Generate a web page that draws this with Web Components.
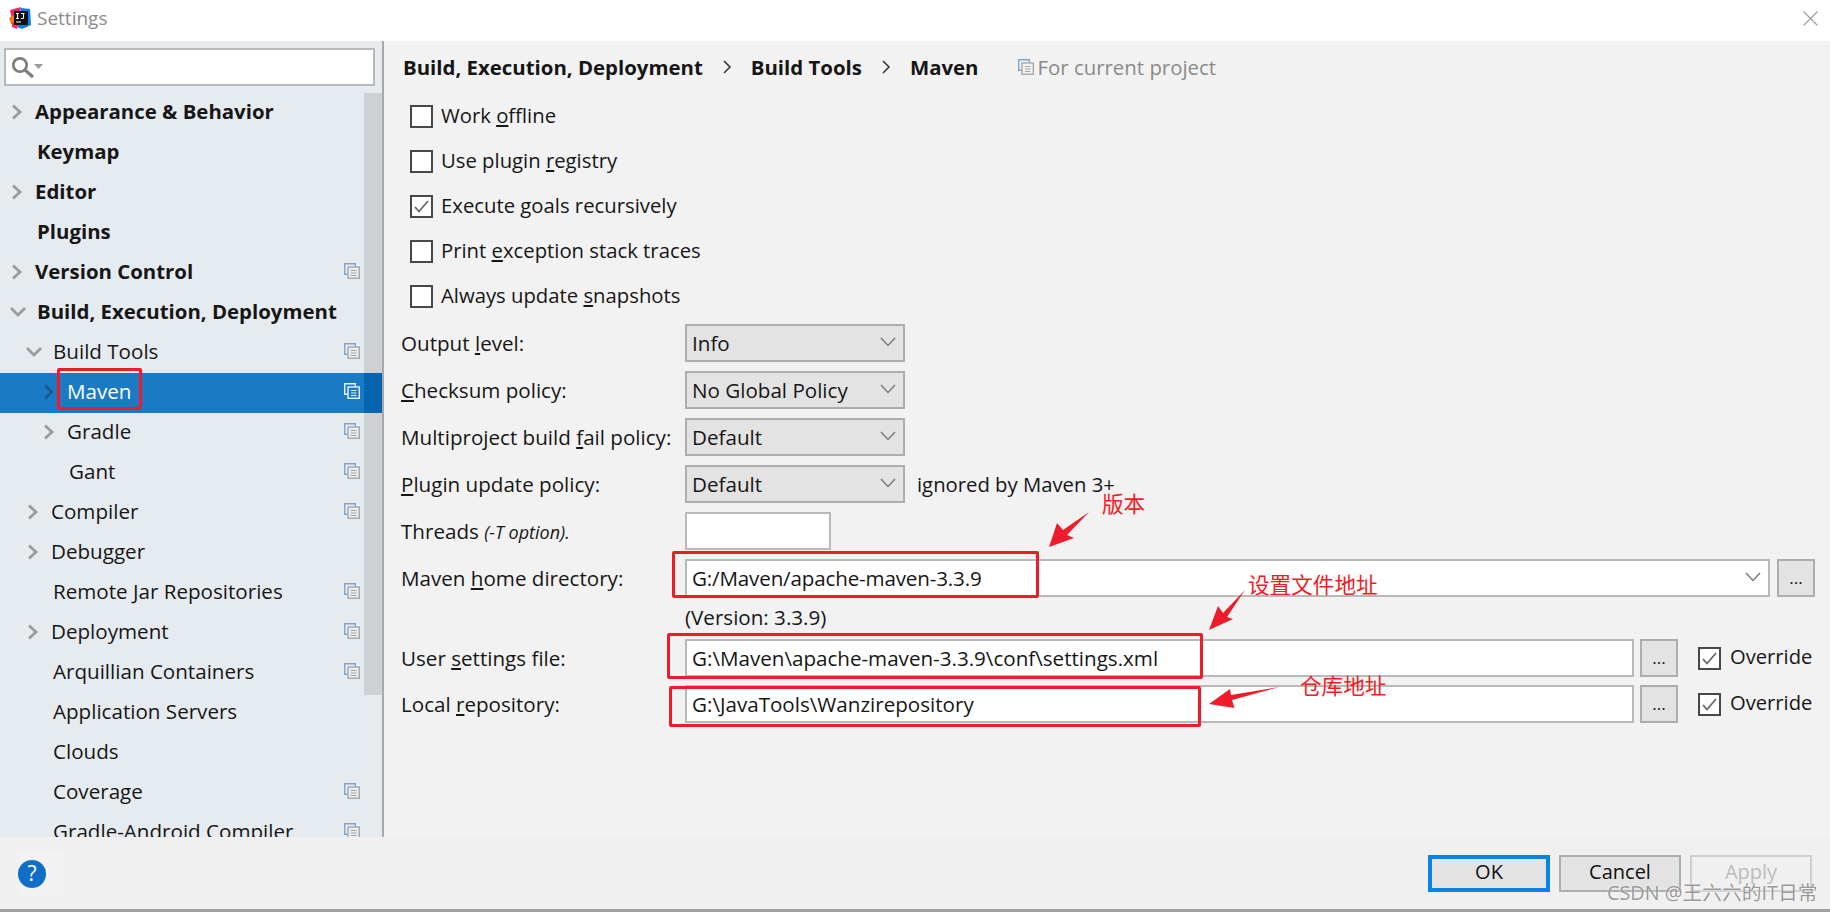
<!DOCTYPE html>
<html lang="en">
<head>
<meta charset="UTF-8" />
<title>Settings</title>
<style>
  html, body { margin: 0; padding: 0; height: 100%; overflow: hidden; }
  body { font-family: "Open Sans", "Noto Sans CJK SC", sans-serif; font-size: 20px; color: #111; }
</style>
</head>
<body>
<settings-dialog>
  <title-bar slot="title"></title-bar>

  <side-tree slot="side">
    <tree-row bold arrow="right" indent="0" text-at="35">Appearance &amp; Behavior</tree-row>
    <tree-row bold indent="0" text-at="37">Keymap</tree-row>
    <tree-row bold arrow="right" indent="0" text-at="35">Editor</tree-row>
    <tree-row bold indent="0" text-at="37">Plugins</tree-row>
    <tree-row bold arrow="right" indent="0" text-at="35" cfg>Version Control</tree-row>
    <tree-row bold arrow="down" indent="0" text-at="37">Build, Execution, Deployment</tree-row>
    <tree-row arrow="down" indent="16" text-at="53" cfg>Build Tools</tree-row>
    <tree-row selected arrow="right" indent="32" text-at="67" cfg>Maven</tree-row>
    <tree-row arrow="right" indent="32" text-at="67" cfg>Gradle</tree-row>
    <tree-row indent="32" text-at="69" cfg>Gant</tree-row>
    <tree-row arrow="right" indent="16" text-at="51" cfg>Compiler</tree-row>
    <tree-row arrow="right" indent="16" text-at="51">Debugger</tree-row>
    <tree-row indent="16" text-at="53" cfg>Remote Jar Repositories</tree-row>
    <tree-row arrow="right" indent="16" text-at="51" cfg>Deployment</tree-row>
    <tree-row indent="16" text-at="53" cfg>Arquillian Containers</tree-row>
    <tree-row indent="16" text-at="53">Application Servers</tree-row>
    <tree-row indent="16" text-at="53">Clouds</tree-row>
    <tree-row indent="16" text-at="53" cfg>Coverage</tree-row>
    <tree-row indent="16" text-at="53" cfg>Gradle-Android Compiler</tree-row>
  </side-tree>

  <maven-panel slot="main"></maven-panel>

  <dialog-footer slot="footer"></dialog-footer>
</settings-dialog>

<template id="dialog-tpl">
  <style>
    :host { display: flex; flex-direction: column; width: 1830px; height: 912px; position: relative; background: #f2f2f2; overflow: hidden; }
    .title { height: 41px; flex: none; }
    .body { flex: 1; display: flex; min-height: 0; }
    .side { width: 384px; flex: none; }
    .main { flex: 1; min-width: 0; }
    .footer { height: 75px; flex: none; }
  </style>
  <div class="title"><slot name="title"></slot></div>
  <div class="body">
    <div class="side"><slot name="side"></slot></div>
    <div class="main"><slot name="main"></slot></div>
  </div>
  <div class="footer"><slot name="footer"></slot></div>
</template>

<template id="title-tpl">
  <style>
    :host { display: flex; align-items: center; height: 41px; box-sizing: border-box; padding-bottom: 4px; background: #fff; color: #8c8c8c; font-size: 19px; }
    svg.logo { margin-left: 9px; margin-right: 5px; flex: none; }
    .name { margin-top: -2px; }
    .x { margin-left: auto; margin-right: 12px; flex: none; }
  </style>
  <svg class="logo" width="23" height="23" viewBox="0 0 23 23">
    <path d="M1 3 L12 0 L10 12 L3 13 Z" fill="#f0266f"/>
    <path d="M0 11 L5 8 L6 19 L2 17 Z" fill="#f97a12"/>
    <path d="M12 1 L21 2 L22 18 L13 22 L8 20 Z" fill="#087cfa"/>
    <path d="M3 15 L9 17 L8 22 L3 20 Z" fill="#fe2857"/>
    <rect x="5" y="4" width="14" height="14" fill="#111"/>
    <path d="M7 6.5h3M8.5 6.5v5M7 11.5h3M12 6.5h3.5M14.5 6.5v4.2q0 .8-1 .8h-1.500" stroke="#fff" stroke-width="1.100" fill="none"/>
    <rect x="7" y="14.500" width="5" height="1" fill="#fff"/>
  </svg>
  <span class="name">Settings</span>
  <svg class="x" width="15" height="15" viewBox="0 0 15 15"><path d="M.5.5l14 14M14.500.5l-14 14" stroke="#9a9a9a" stroke-width="1.100" fill="none"/></svg>
</template>

<template id="tree-tpl">
  <style>
    :host { display: flex; flex-direction: column; position: relative; height: 796px; background: #e6ebf0; border-right: 2px solid #a9a9a9; box-sizing: border-box; overflow: hidden; }
    .search { flex: none; height: 38px; margin: 7px 7px 7px 4px; background: #fff; border: 2px solid #b9b9b9; box-sizing: border-box; display: flex; align-items: center; padding-left: 6px; }
    .wrap { flex: 1; display: flex; min-height: 0; position: relative; }
    .rows { flex: 1; min-width: 0; }
    .bar { position: absolute; right: 0; top: 0; width: 18px; height: 602px; background: #ccd1d5; }
  </style>
  <div class="search">
    <svg width="32" height="26" viewBox="0 0 32 26"><circle cx="8" cy="11" r="6.700" fill="none" stroke="#7f7f7f" stroke-width="2.800"/><path d="M13 16l8 7" stroke="#7f7f7f" stroke-width="3.200"/><path d="M22 10h9l-4.500 5z" fill="#9a9a9a"/></svg>
  </div>
  <div class="wrap">
    <div class="bar"></div>
    <div class="rows"><slot></slot></div>
  </div>
</template>

<template id="row-tpl">
  <style>
    :host { display: flex; align-items: center; height: 40px; position: relative; white-space: nowrap; color: #161616; font-size: 20.6px; }
    :host([bold]) { font-weight: 700; font-size: 20.400px; }
    :host([selected]) { background: #1a7ac4; color: #fff; }
    .arrow { position: absolute; top: 11px; height: 16px; display: flex; align-items: center; }
    .label { position: absolute; top: 0; line-height: 37px; }
    .cfg { position: absolute; left: 344px; top: 10px; display: flex; }
    .thumb { display: none; position: absolute; right: 0; top: 0; bottom: 0; width: 18px; background: #0465ae; }
    :host([selected]) .thumb { display: block; }
  </style>
  <span class="thumb"></span>
  <span class="arrow"></span>
  <span class="label"><slot></slot></span>
  <span class="cfg"></span>
</template>

<template id="panel-tpl">
  <style>
    :host { display: flex; flex-direction: column; position: relative; height: 796px; padding: 0 0 0 17px; box-sizing: border-box; font-size: 20.6px; color: #161616; }
    .crumbs { display: flex; align-items: center; height: 44px; margin-top: 4px; margin-left: 2px; font-weight: 700; white-space: nowrap; font-size: 20.400px; }
    .crumbs .sep { margin: 0 19px; display: flex; }
    .crumbs .proj { font-weight: 400; color: #8a8a8a; margin-left: 39px; display: flex; align-items: center; gap: 4px; --cfg-f: #f2f2f2; }
    .checks { display: flex; flex-direction: column; gap: 22px; margin-top: 16px; margin-left: 9px; font-size: 20.300px; }
    .form { display: grid; grid-template-columns: 284px 1fr; margin-top: 16px; white-space: nowrap; }
    .lbl { align-self: center; }
    .row2 { display: flex; align-items: center; min-width: 0; }
    u { text-underline-offset: 2px; }
    i { font-size: 18px; }
    .hint { margin-left: 12px; font-size: 20.300px; }
    .gap47 { margin-bottom: 9px; }
    .over { margin-left: 14px; gap: 9px; font-size: 20.200px; --txt-top: -5px; }
  </style>
  <div class="crumbs">
    <span>Build, Execution, Deployment</span>
    <span class="sep"><svg width="10" height="16" viewBox="0 0 10 16"><path d="M2 2l6 6-6 6" stroke="#333" stroke-width="1.500" fill="none"/></svg></span>
    <span>Build Tools</span>
    <span class="sep"><svg width="10" height="16" viewBox="0 0 10 16"><path d="M2 2l6 6-6 6" stroke="#333" stroke-width="1.500" fill="none"/></svg></span>
    <span>Maven</span>
    <span class="proj"><cfg-icon></cfg-icon>For current project</span>
  </div>
  <div class="checks">
    <check-row>Work <u>o</u>ffline</check-row>
    <check-row>Use plugin <u>r</u>egistry</check-row>
    <check-row checked>Execute <u>g</u>oals recursively</check-row>
    <check-row>Print <u>e</u>xception stack traces</check-row>
    <check-row>Always update <u>s</u>napshots</check-row>
  </div>
  <div class="form">
    <span class="lbl gap47">Output <u>l</u>evel:</span>
    <div class="row2 gap47"><combo-box style="width:220px">Info</combo-box></div>
    <span class="lbl gap47"><u>C</u>hecksum policy:</span>
    <div class="row2 gap47"><combo-box style="width:220px">No Global Policy</combo-box></div>
    <span class="lbl gap47">Multiproject build <u>f</u>ail policy:</span>
    <div class="row2 gap47"><combo-box style="width:220px">Default</combo-box></div>
    <span class="lbl gap47"><u>P</u>lugin update policy:</span>
    <div class="row2 gap47"><combo-box style="width:220px">Default</combo-box><span class="hint">ignored by Maven 3+</span></div>
    <span class="lbl gap47">Threads <i>(-T option).</i></span>
    <div class="row2 gap47"><text-field style="width:146px"></text-field></div>
    <span class="lbl">Maven <u>h</u>ome directory:</span>
    <div class="row2" style="gap:7px"><combo-box white style="width:1085px;letter-spacing:-.16px">G:/Maven/apache-maven-3.3.9</combo-box><dots-button></dots-button></div>
    <span></span>
    <div style="height:42px;line-height:40px">(Version: 3.3.9)</div>
    <span class="lbl" style="margin-bottom:8px">User <u>s</u>ettings file:</span>
    <div class="row2" style="gap:6px;margin-bottom:8px"><text-field style="width:949px">G:\Maven\apache-maven-3.3.9\conf\settings.xml</text-field><dots-button></dots-button><check-row checked class="over">Override</check-row></div>
    <span class="lbl">Local <u>r</u>epository:</span>
    <div class="row2" style="gap:6px"><text-field style="width:949px">G:\JavaTools\Wanzirepository</text-field><dots-button></dots-button><check-row checked class="over">Override</check-row></div>
  </div>
</template>

<template id="check-tpl">
  <style>
    :host { display: flex; align-items: center; gap: 8px; height: 23px; white-space: nowrap; }
    .box { width: 23px; height: 23px; box-sizing: border-box; background: #fff; border: 2px solid #484848; flex: none; display: flex; align-items: center; justify-content: center; }
    .txt { margin-top: var(--txt-top, -3px); }
    u { text-underline-offset: 2px; }
  </style>
  <span class="box"></span>
  <span class="txt"><slot></slot></span>
</template>

<template id="combo-tpl">
  <style>
    :host { display: flex; align-items: center; height: 38px; box-sizing: border-box; background: #e3e3e3; border: 2px solid #adadad; padding-left: 5px; flex: none; white-space: nowrap; }
    :host([white]) { background: #fff; border-color: #b9b9b9; }
    svg { margin-left: auto; margin-right: 7px; margin-bottom: 3px; flex: none; }
  </style>
  <slot></slot>
  <svg width="16" height="10" viewBox="0 0 16 10"><path d="M1 1l7 7.500L15 1" stroke="#7c7c7c" stroke-width="1.500" fill="none"/></svg>
</template>

<template id="field-tpl">
  <style>
    :host { display: flex; align-items: center; height: 38px; box-sizing: border-box; background: #fff; border: 2px solid #b9b9b9; padding-left: 5px; flex: none; white-space: nowrap; }
  </style>
  <slot></slot>
</template>

<template id="dots-tpl">
  <style>
    :host { display: flex; align-items: center; justify-content: center; width: 38px; height: 38px; box-sizing: border-box; background: #e3e3e3; border: 2px solid #adadad; flex: none; line-height: 1; padding-bottom: 2px; font-size: 17px; }
  </style>
  ...
</template>

<template id="footer-tpl">
  <style>
    :host { display: flex; align-items: flex-start; height: 75px; box-sizing: border-box; padding-top: 18px; border-bottom: 3px solid #a0a0a0; background: #f0f0f0; }
    .help { margin-left: 18px; width: 46px; height: 44px; margin-top: -3px; background: #f2f2f2; display: flex; align-items: center; }
    .btns { margin-left: auto; margin-right: 18px; display: flex; gap: 9px; }
    .c { width: 28px; height: 28px; border-radius: 50%; background: #0f6fc6; color: #fff; font-size: 21px; text-align: center; line-height: 27px; }
  </style>
  <div class="help"><div class="c">?</div></div>
  <div class="btns">
    <dialog-button primary>OK</dialog-button>
    <dialog-button>Cancel</dialog-button>
    <dialog-button disabled>Apply</dialog-button>
  </div>
</template>

<template id="button-tpl">
  <style>
    :host { display: flex; align-items: center; justify-content: center; width: 122px; height: 37px; box-sizing: border-box; padding-bottom: 4px; background: #e3e3e3; border: 2px solid #adadad; font-size: 20px; color: #111; }
    :host([primary]) { border: 4px solid #0a84e0; }
    :host([disabled]) { background: #f0f0f0; border-color: #cfcfcf; color: #bdbdbd; }
  </style>
  <slot></slot>
</template>

<template id="cfg-tpl">
  <style>
    :host { display: inline-flex; }
  </style>
  <svg width="16" height="16" viewBox="0 0 16 16">
    <path d="M.7.7h10.600v10.600H.700z" fill="none" stroke="var(--cfg-a,#7aa7cf)" stroke-width="1.400"/>
    <rect x="4" y="4" width="11.300" height="11.300" fill="var(--cfg-f,#e6ebf0)" stroke="var(--cfg-b,#a8a8a8)" stroke-width="1.400"/>
    <path d="M7 7.500h5.500M7 10h5.500M7 12.500h5.500" stroke="var(--cfg-b,#a8a8a8)" stroke-width="1.200"/>
  </svg>
</template>

<template id="notes-tpl">
  <style>
    :host { position: absolute; left: 0; top: 0; width: 1830px; height: 912px; pointer-events: none; font-family: "Noto Sans CJK SC", sans-serif; color: #f01c25; font-size: 21.600px; }
    .box { position: absolute; box-sizing: border-box; border: 3px solid #ee1c2b; border-radius: 2px; }
    span { position: absolute; line-height: 24px; white-space: nowrap; }
    svg { position: absolute; left: 0; top: 0; }
    .mark { color: rgba(120, 120, 120, .75); font-family: "Open Sans", "Noto Sans CJK SC", sans-serif; font-size: 19.800px; text-shadow: 0 0 2px #fff; }
  </style>
  <div class="box" style="left:57px;top:368px;width:85px;height:42px"></div>
  <div class="box" style="left:672px;top:551px;width:367px;height:47px"></div>
  <div class="box" style="left:667px;top:633px;width:536px;height:46px"></div>
  <div class="box" style="left:669px;top:686px;width:532px;height:41px"></div>
  <svg width="1830" height="912">
    <path d="M1089 512 L1067 535 L1074 538 L1049 547 L1057 523 L1063 530 Z" fill="#ee1c2b"/>
    <path d="M1245 590 L1227 617 L1233 619 L1209 630 L1218 606 L1223 613 Z" fill="#ee1c2b"/>
    <path d="M1279 687 L1232 700 L1234.500 708 L1209 704 L1230 689 L1231 695 Z" fill="#ee1c2b"/>
  </svg>
  <span style="left:1102px;top:491px">版本</span>
  <span style="left:1248px;top:572px">设置文件地址</span>
  <span style="left:1300px;top:673px">仓库地址</span>
  <span class="mark" style="left:1607px;top:881px">CSDN @王六六的IT日常</span>
</template>

<script>
  // every element here is just a template clone, so share that bit
  const base = (id) => class extends HTMLElement {
    constructor() {
      super();
      this.attachShadow({ mode: 'open' }).appendChild(
        document.getElementById(id).content.cloneNode(true)
      );
    }
  };

  const chevron = {
    right: '<svg width="12" height="16" viewBox="0 0 12 16"><path d="M2 1.500l7 6.500-7 6.500" stroke="COLOR" stroke-width="2.800" fill="none"/></svg>',
    down: '<svg width="16" height="12" viewBox="0 0 16 12"><path d="M1 2l7 7 7-7" stroke="COLOR" stroke-width="2.800" fill="none"/></svg>'
  };

  class TreeRow extends base('row-tpl') {
    connectedCallback() {
      const sel = this.hasAttribute('selected');
      const root = this.shadowRoot;
      const dir = this.getAttribute('arrow');
      const arrow = root.querySelector('.arrow');
      if (dir) {
        arrow.innerHTML = chevron[dir].replace('COLOR', sel ? '#175a8e' : '#9a9a9a');
        arrow.style.left = (+this.getAttribute('indent') + (dir === 'down' ? 10 : 11)) + 'px';
      }
      root.querySelector('.label').style.left = this.getAttribute('text-at') + 'px';
      if (this.hasAttribute('cfg')) {
        const icon = document.createElement('cfg-icon');
        if (sel) {
          icon.style.setProperty('--cfg-a', '#e8f2fa');
          icon.style.setProperty('--cfg-b', '#e8f2fa');
          icon.style.setProperty('--cfg-f', '#1a7ac4');
        }
        root.querySelector('.cfg').appendChild(icon);
      }
    }
  }

  class CheckRow extends base('check-tpl') {
    connectedCallback() {
      if (this.hasAttribute('checked')) {
        this.shadowRoot.querySelector('.box').innerHTML =
          '<svg width="17" height="15" viewBox="0 0 17 15"><path d="M2 8l4 4.500L15 2" stroke="#666" stroke-width="1.800" fill="none"/></svg>';
      }
    }
  }

  customElements.define('settings-dialog', class extends base('dialog-tpl') {
    connectedCallback() {
      if (!this.shadowRoot.querySelector('page-notes')) {
        this.shadowRoot.appendChild(document.createElement('page-notes'));
      }
    }
  });
  customElements.define('title-bar', base('title-tpl'));
  customElements.define('side-tree', base('tree-tpl'));
  customElements.define('tree-row', TreeRow);
  customElements.define('maven-panel', base('panel-tpl'));
  customElements.define('check-row', CheckRow);
  customElements.define('combo-box', base('combo-tpl'));
  customElements.define('text-field', base('field-tpl'));
  customElements.define('dots-button', base('dots-tpl'));
  customElements.define('dialog-footer', base('footer-tpl'));
  customElements.define('dialog-button', base('button-tpl'));
  customElements.define('cfg-icon', base('cfg-tpl'));
  customElements.define('page-notes', base('notes-tpl'));
</script>
</body>
</html>
